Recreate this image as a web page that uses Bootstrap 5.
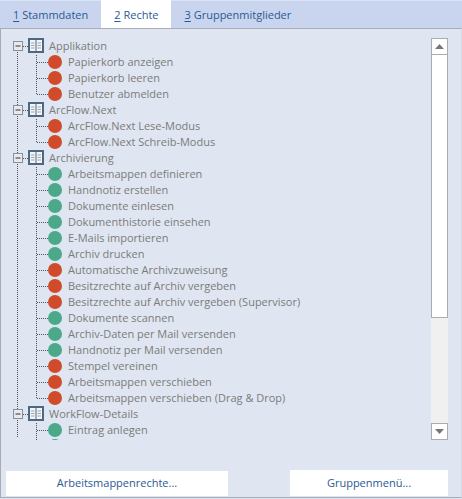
<!DOCTYPE html>
<html lang="de">
<head>
  <meta charset="UTF-8"/>
  <title>Rechte</title>
  <link href="https://cdn.jsdelivr.net/npm/bootstrap@5.3.0/dist/css/bootstrap.min.css" rel="stylesheet"/>
  <style>
    html,body{height:499px;overflow:hidden;}
    body{background:#e0e6f1;font-family:"Open Sans","Noto Sans",sans-serif;font-size:11px;color:#7b7b7b;}
    .tab-strip{height:28px;background:#c9d5ee;border-top:1px solid #d9e1f2;padding-left:2px;}
    .tab-strip a{padding:0 13px 0 11px;line-height:27px;color:#2a5a94;text-decoration:none;font-size:11px;height:28px;}
    .tab-strip a.on{background:#fff;margin-top:-1px;height:28px;line-height:29px;padding:0 12px 0 13px;}
    .tab-strip a.last-tab{padding-left:14px;}
    .tab-strip u{text-underline-offset:2px;}
    .panel-box{height:470px;border:1px solid #a9acb2;border-right-color:#d5dae3;padding:9px 13px 0 5px;}
    .tree-wrap{height:402px;overflow:hidden;}
    .tree-scroll{flex:1;overflow:hidden;position:relative;padding-left:8px;}
    .tree-row{height:16px;line-height:16px;white-space:nowrap;}
    .tree-lines{position:absolute;left:0;top:0;}
    .head-row{padding-left:35px;}
    .leaf-row{padding-left:54px;}
    .vbar{width:17px;height:402px;background:#f0f0f0;}
    .vbar .arrow{height:17px;border:1px solid #a9acb2;background:#fff;}
    .vbar .thumb{height:263px;background:#fff;border-left:1px solid #a9acb2;border-right:1px solid #a9acb2;border-bottom:1px solid #a9acb2;}
    .foot-btn{background:#fff;color:#2a5a94;border-radius:0;border:0;font-size:11px;padding:0;}
    .btn-a{width:222px;height:25px;margin-top:1px;}
    .btn-b{width:158px;height:26px;}
    .foot-bar{margin-top:30px;}
  </style>
</head>
<body>
<div class="tab-strip d-flex">
  <a href="#"><u>1</u> Stammdaten</a>
  <a href="#" class="on"><u>2</u> Rechte</a>
  <a href="#" class="last-tab"><u>3</u> Gruppenmitglieder</a>
</div>
<div class="panel-box">
  <div class="tree-wrap d-flex">
    <div class="tree-scroll" id="tree"></div>
    <div class="vbar d-flex flex-column">
      <div class="arrow d-flex align-items-center justify-content-center"><svg width="9" height="5"><path d="M4.5 0L9 5H0z" fill="#777"/></svg></div>
      <div class="thumb"></div>
      <div class="flex-grow-1"></div>
      <div class="arrow d-flex align-items-center justify-content-center"><svg width="9" height="5"><path d="M0 0H9L4.5 5z" fill="#777"/></svg></div>
    </div>
  </div>
  <div class="foot-bar d-flex justify-content-between align-items-start">
    <button class="btn foot-btn btn-a">Arbeitsmappenrechte...</button>
    <button class="btn foot-btn btn-b">Gruppenmenü...</button>
  </div>
</div>
<script>
const R='#cf4b2c',G='#49a989';
const groups=[
 ['Applikation',[['Papierkorb anzeigen',R],['Papierkorb leeren',R],['Benutzer abmelden',R]]],
 ['ArcFlow.Next',[['ArcFlow.Next Lese-Modus',R],['ArcFlow.Next Schreib-Modus',R]]],
 ['Archivierung',[['Arbeitsmappen definieren',G],['Handnotiz erstellen',G],['Dokumente einlesen',G],['Dokumenthistorie einsehen',G],['E-Mails importieren',G],['Archiv drucken',G],['Automatische Archivzuweisung',R],['Besitzrechte auf Archiv vergeben',R],['Besitzrechte auf Archiv vergeben (Supervisor)',R],['Dokumente scannen',G],['Archiv-Daten per Mail versenden',G],['Handnotiz per Mail versenden',G],['Stempel vereinen',R],['Arbeitsmappen verschieben',R],['Arbeitsmappen verschieben (Drag &amp; Drop)',R]]],
 ['WorkFlow-Details',[['Eintrag anlegen',G],['',G]]]
];
let html='';
let y=0,lines='';
const dot='stroke="#555" stroke-dasharray="1 1"';
groups.forEach(g=>{
  const hy=y+8;
  const icon=`<g transform="translate(7.5,${hy-4.5})"><rect width="9" height="9" fill="#e6e9ef" stroke="#8a8f98"/><path d="M2 4.5H7" stroke="#333"/></g>`
   +`<g transform="translate(22.5,${hy-7.5})"><rect width="15" height="14" fill="#4a6688" stroke="#4a6688"/><rect x="1.5" y="1.5" width="5.5" height="11" fill="#f6f6f0"/><rect x="8" y="1.5" width="5.5" height="11" fill="#f6f6f0"/><path d="M2.5 4.5h3.5M2.5 7h3.5M2.5 9.5h3.5M9 4.5h3.5M9 7h3.5M9 9.5h3.5" stroke="#9aa2ac"/></g>`;
  lines+=`<path d="M17 ${hy+.5}H22" ${dot}/>`+icon;
  html+=`<div class="tree-row head-row">${g[0]}</div>`;
  y+=16;
  g[1].forEach(l=>{
    const ly=y+8;
    lines+=`<path d="M31 ${ly+.5}H42" ${dot}/><circle cx="49" cy="${ly}" r="7" fill="${l[1]}"/>`;
    html+=`<div class="tree-row leaf-row">${l[0]}</div>`;
    y+=16;
  });
  lines+=`<path d="M30.5 ${hy+9}V${y-8}" ${dot}/>`;
});
lines=`<path d="M11.5 14V400" ${dot}/>`+lines;
document.getElementById('tree').innerHTML=`<svg class="tree-lines" width="60" height="402">${lines}</svg>`+html;
</script>
<script src="https://cdn.jsdelivr.net/npm/bootstrap@5.3.0/dist/js/bootstrap.bundle.min.js"></script>
</body>
</html>
